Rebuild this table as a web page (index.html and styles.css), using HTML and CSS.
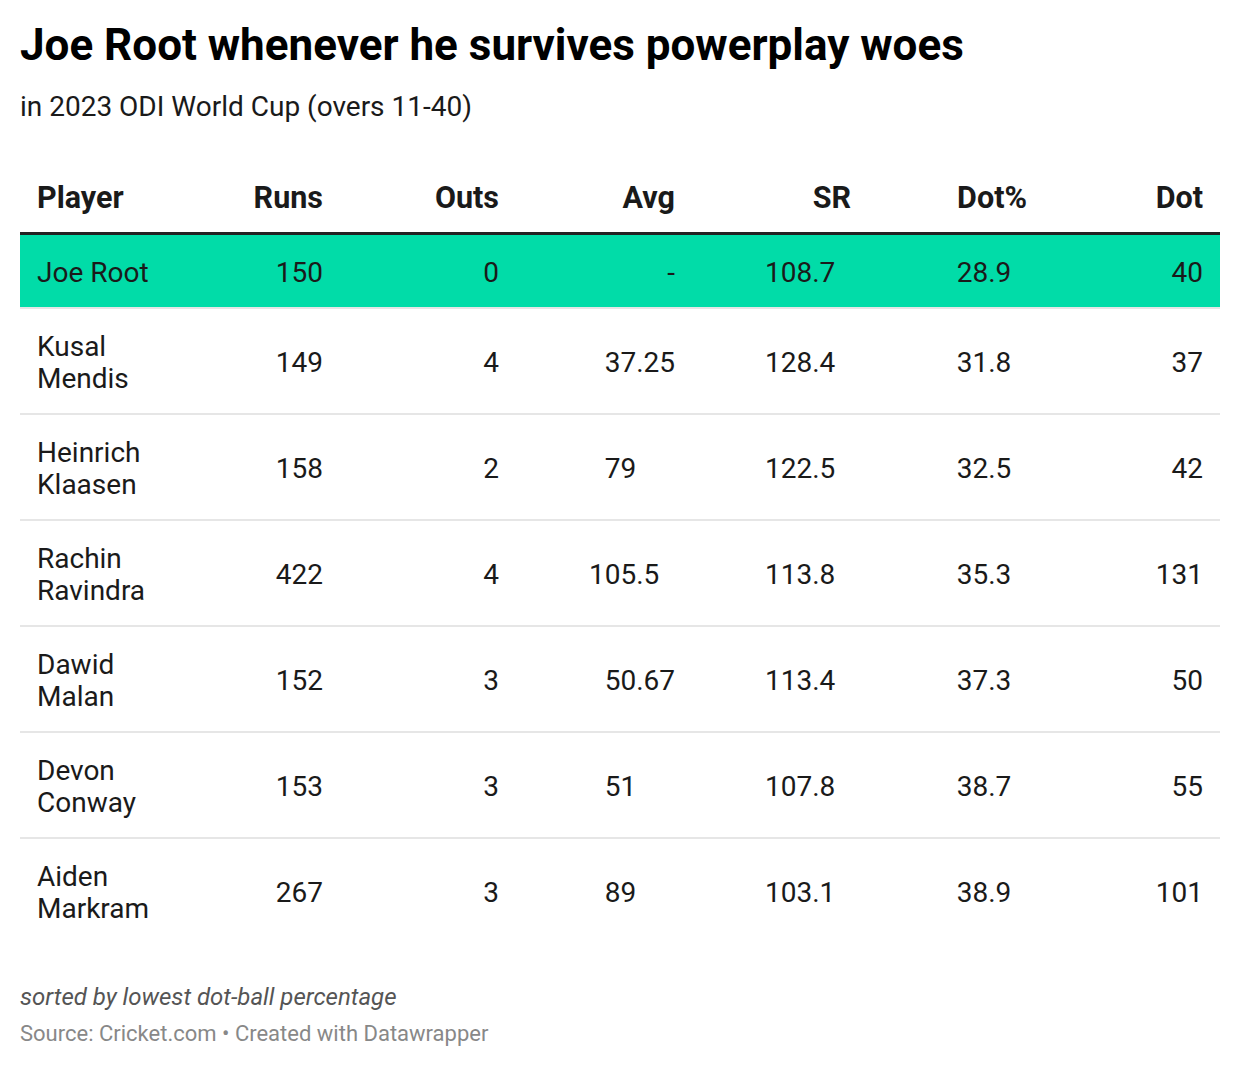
FILE: index.html
```html
<!DOCTYPE html>
<html lang="en">
<head>
<meta charset="utf-8">
<title>Joe Root whenever he survives powerplay woes</title>
<link rel="stylesheet" href="styles.css">
</head>
<body>
<div class="chart">
  <h1 class="title">Joe Root whenever he survives powerplay woes</h1>
  <p class="subtitle">in 2023 ODI World Cup (overs 11-40)</p>
  <table class="tbl">
    <colgroup>
      <col class="c-player"><col class="c-num"><col class="c-num"><col class="c-num"><col class="c-num"><col class="c-num"><col class="c-num">
    </colgroup>
    <thead>
      <tr>
        <th class="player">Player</th>
        <th>Runs</th>
        <th>Outs</th>
        <th>Avg</th>
        <th>SR</th>
        <th>Dot%</th>
        <th>Dot</th>
      </tr>
    </thead>
    <tbody>
      <tr class="hl">
        <td class="player">Joe Root</td>
        <td>150</td>
        <td>0</td>
        <td>-</td>
        <td><span class="int">108</span><span class="frac">.7</span></td>
        <td><span class="int">28</span><span class="frac">.9</span></td>
        <td>40</td>
      </tr>
      <tr>
        <td class="player">Kusal Mendis</td>
        <td>149</td>
        <td>4</td>
        <td><span class="int">37</span><span class="frac">.25</span></td>
        <td><span class="int">128</span><span class="frac">.4</span></td>
        <td><span class="int">31</span><span class="frac">.8</span></td>
        <td>37</td>
      </tr>
      <tr>
        <td class="player">Heinrich Klaasen</td>
        <td>158</td>
        <td>2</td>
        <td><span class="int">79</span><span class="frac"></span></td>
        <td><span class="int">122</span><span class="frac">.5</span></td>
        <td><span class="int">32</span><span class="frac">.5</span></td>
        <td>42</td>
      </tr>
      <tr>
        <td class="player">Rachin Ravindra</td>
        <td>422</td>
        <td>4</td>
        <td><span class="int">105</span><span class="frac">.5</span></td>
        <td><span class="int">113</span><span class="frac">.8</span></td>
        <td><span class="int">35</span><span class="frac">.3</span></td>
        <td>131</td>
      </tr>
      <tr>
        <td class="player">Dawid Malan</td>
        <td>152</td>
        <td>3</td>
        <td><span class="int">50</span><span class="frac">.67</span></td>
        <td><span class="int">113</span><span class="frac">.4</span></td>
        <td><span class="int">37</span><span class="frac">.3</span></td>
        <td>50</td>
      </tr>
      <tr>
        <td class="player">Devon Conway</td>
        <td>153</td>
        <td>3</td>
        <td><span class="int">51</span><span class="frac"></span></td>
        <td><span class="int">107</span><span class="frac">.8</span></td>
        <td><span class="int">38</span><span class="frac">.7</span></td>
        <td>55</td>
      </tr>
      <tr class="last">
        <td class="player">Aiden Markram</td>
        <td>267</td>
        <td>3</td>
        <td><span class="int">89</span><span class="frac"></span></td>
        <td><span class="int">103</span><span class="frac">.1</span></td>
        <td><span class="int">38</span><span class="frac">.9</span></td>
        <td>101</td>
      </tr>
    </tbody>
  </table>
  <p class="notes">sorted by lowest dot-ball percentage</p>
  <p class="byline">Source: Cricket.com • Created with Datawrapper</p>
</div>
</body>
</html>
```

FILE: styles.css
```css
html, body {
  margin: 0;
  padding: 0;
  background: #ffffff;
}

body {
  font-family: Roboto, "Liberation Sans", Arial, sans-serif;
  color: #1a1a1a;
}

.chart {
  padding: 19px 20px 0 20px;
}

.title {
  margin: 0;
  font-size: 44px;
  font-weight: 700;
  line-height: 52px;
  color: #000;
}

.subtitle {
  margin: 19px 0 0 0;
  font-size: 28px;
  line-height: 34px;
  color: #1a1a1a;
}

.tbl {
  margin-top: 56px;
  width: 1200px;
  border-collapse: collapse;
  table-layout: fixed;
  font-size: 28px;
  line-height: 32px;
}

.c-player { width: 144px; }
.c-num { width: 176px; }

.tbl th {
  font-size: 30.5px;
  line-height: 36px;
  font-weight: 700;
  text-align: right;
  padding: 0 17px 16px 17px;
  border-bottom: 3px solid #222;
  color: #1a1a1a;
  vertical-align: bottom;
}

.tbl td {
  text-align: right;
  padding: 22px 17px 18px 17px;
  border-bottom: 2px solid #e6e6e6;
  vertical-align: middle;
  color: #1a1a1a;
  white-space: nowrap;
}

.tbl th.player,
.tbl td.player {
  text-align: left;
  padding-right: 2px;
  white-space: normal;
}

.tbl tr.hl td {
  background: #01dca8;
}

.tbl tr.last td {
  border-bottom: none;
}

.int {
  display: inline-block;
  text-align: right;
}

.frac {
  display: inline-block;
  width: 2.47ch;
  text-align: left;
}

.notes {
  margin: 39px 0 0 0;
  font-size: 24px;
  line-height: 30px;
  font-style: italic;
  color: #555;
}

.byline {
  margin: 7px 0 0 0;
  font-size: 22px;
  line-height: 30px;
  color: #888;
}
```
